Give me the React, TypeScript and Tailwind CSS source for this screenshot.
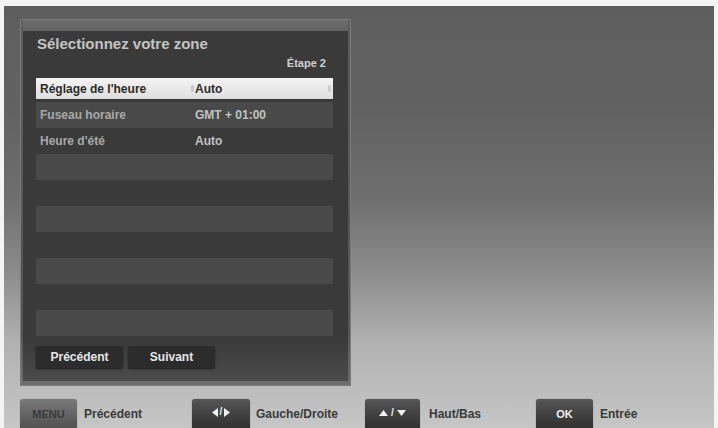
import React from 'react';

const rows = [
  { label: "Réglage de l'heure", value: 'Auto', selected: true },
  { label: 'Fuseau horaire', value: 'GMT + 01:00' },
  { label: "Heure d'été", value: 'Auto' },
  { label: '', value: '' },
  { label: '', value: '' },
  { label: '', value: '' },
  { label: '', value: '' },
  { label: '', value: '' },
  { label: '', value: '' },
  { label: '', value: '' },
];

const Key: React.FC<{ children: React.ReactNode; dim?: boolean; w: string }> = ({ children, dim, w }) => (
  <div
    className={`${w} h-[34px] rounded-t-[3px] flex items-start justify-center pt-[7px] text-[11px] font-bold ${
      dim
        ? 'bg-[linear-gradient(to_bottom,#7a7a7a,#4a4a4a)] text-[#3a3a3a]'
        : 'bg-[linear-gradient(to_bottom,#555555,#2a2a2a)] text-[#f2f2f2]'
    } shadow-[0_0_1px_rgba(0,0,0,0.5)]`}
  >
    {children}
  </div>
);

const Tri: React.FC<{ dir: 'l' | 'r' | 'u' | 'd' }> = ({ dir }) => {
  const pts = {
    l: '6,0 6,9 0,4.5',
    r: '0,0 0,9 6,4.5',
    u: '0,6 9,6 4.5,0',
    d: '0,0 9,0 4.5,6',
  }[dir];
  const vert = dir === 'u' || dir === 'd';
  return (
    <svg width={vert ? 9 : 6} height={vert ? 6 : 9} className="inline-block">
      <polygon points={pts} fill="#f2f2f2" />
    </svg>
  );
};

const App: React.FC = () => {
  return (
    <div className="w-[718px] h-[428px] overflow-hidden bg-[#f4f4f4] pt-[6px] px-[4px] font-['Liberation_Sans',Arial,sans-serif]">
      <div className="h-[422px] bg-[linear-gradient(to_bottom,#5f5e5f_0%,#626262_25%,#6e6e6e_45%,#8a8a8a_62%,#b2b2b2_80%,#c6c6c6_100%)] pl-[16px] pt-[13px]">
        {/* Panel */}
        <div className="w-[331px] h-[367px] border border-[#7a7a7a] bg-[linear-gradient(to_bottom,#5c5c5c_0%,#555555_85%,#6e6e6e_100%)] flex flex-col">
          <div className="h-[11px] bg-[linear-gradient(to_bottom,#6e6e6e,#626262)] mx-[2px]" />
          <div className="flex-1 mx-[2px] mb-[4px] bg-[linear-gradient(to_bottom,#3b3a3a_0%,#3b3a3a_88%,#4c4b4b_100%)] pl-[13px] pr-[15px] flex flex-col">
            <div className="mt-[4px] text-[15px] leading-[17px] font-bold text-[#c4c4c4] pl-[1px]">
              Sélectionnez votre zone
            </div>
            <div className="mt-[5px] text-[11px] leading-[12px] font-bold text-[#d0d0d0] text-right pr-[7px]">
              Étape 2
            </div>
            <div className="mt-[7px] flex flex-col">
              {rows.map((r, i) => (
                <div key={i} className={`h-[26px] ${i % 2 === 1 ? 'bg-[#4a4949]' : 'bg-[#3b3a3a]'}`}>
                  {r.selected ? (
                    <div className="mt-[2px] h-[21px] bg-[linear-gradient(to_bottom,#f4f4f4,#dedede)] flex items-center text-[12px] font-bold text-[#2c2c2c] relative">
                      <span className="pl-[4px] w-[159px]">{r.label}</span>
                      <span>{r.value}</span>
                      <span className="absolute left-[155px] top-[7px] w-[3px] h-[7px] rounded-full bg-[#c8c8c8]" />
                      <span className="absolute right-[2px] top-[7px] w-[3px] h-[7px] rounded-full bg-[#cccccc]" />
                    </div>
                  ) : (
                    <div className="h-full flex items-center text-[12px] font-bold">
                      <span className="pl-[4px] w-[159px] text-[#a8a8a8]">{r.label}</span>
                      <span className="text-[#c2c2c2]">{r.value}</span>
                    </div>
                  )}
                </div>
              ))}
            </div>
            <div className="mt-[10px] flex gap-[5px]">
              <div className="w-[87px] h-[22px] rounded-[2px] bg-[#2d2c2c] shadow-[0_1px_2px_rgba(0,0,0,0.6)] flex items-center justify-center text-[12px] font-bold text-[#e6e6e6]">
                Précédent
              </div>
              <div className="w-[87px] h-[22px] rounded-[2px] bg-[#2d2c2c] shadow-[0_1px_2px_rgba(0,0,0,0.6)] flex items-center justify-center text-[12px] font-bold text-[#e6e6e6]">
                Suivant
              </div>
            </div>
          </div>
        </div>

        {/* Footer keys */}
        <div className="mt-[13px] flex items-start">
          <div className="w-[172px] flex gap-[7px]">
            <Key w="w-[57px]" dim>
              MENU
            </Key>
            <span className="pt-[6px] text-[12px] font-bold text-[#3a3a3a]">Précédent</span>
          </div>
          <div className="w-[173px] flex gap-[6px]">
            <Key w="w-[58px]">
              <span className="flex items-center gap-[2px] mt-[1px]">
                <Tri dir="l" />
                <span className="text-[10px] leading-[10px]">/</span>
                <Tri dir="r" />
              </span>
            </Key>
            <span className="pt-[6px] text-[12px] font-bold text-[#3a3a3a]">Gauche/Droite</span>
          </div>
          <div className="w-[171px] flex gap-[9px]">
            <Key w="w-[55px]">
              <span className="flex items-center gap-[3px] mt-[2px]">
                <Tri dir="u" />
                <span className="text-[10px] leading-[10px]">/</span>
                <Tri dir="d" />
              </span>
            </Key>
            <span className="pt-[6px] text-[12px] font-bold text-[#3a3a3a]">Haut/Bas</span>
          </div>
          <div className="flex gap-[7px]">
            <Key w="w-[57px]">OK</Key>
            <span className="pt-[6px] text-[12px] font-bold text-[#3a3a3a]">Entrée</span>
          </div>
        </div>
      </div>
    </div>
  );
};

export default App;
